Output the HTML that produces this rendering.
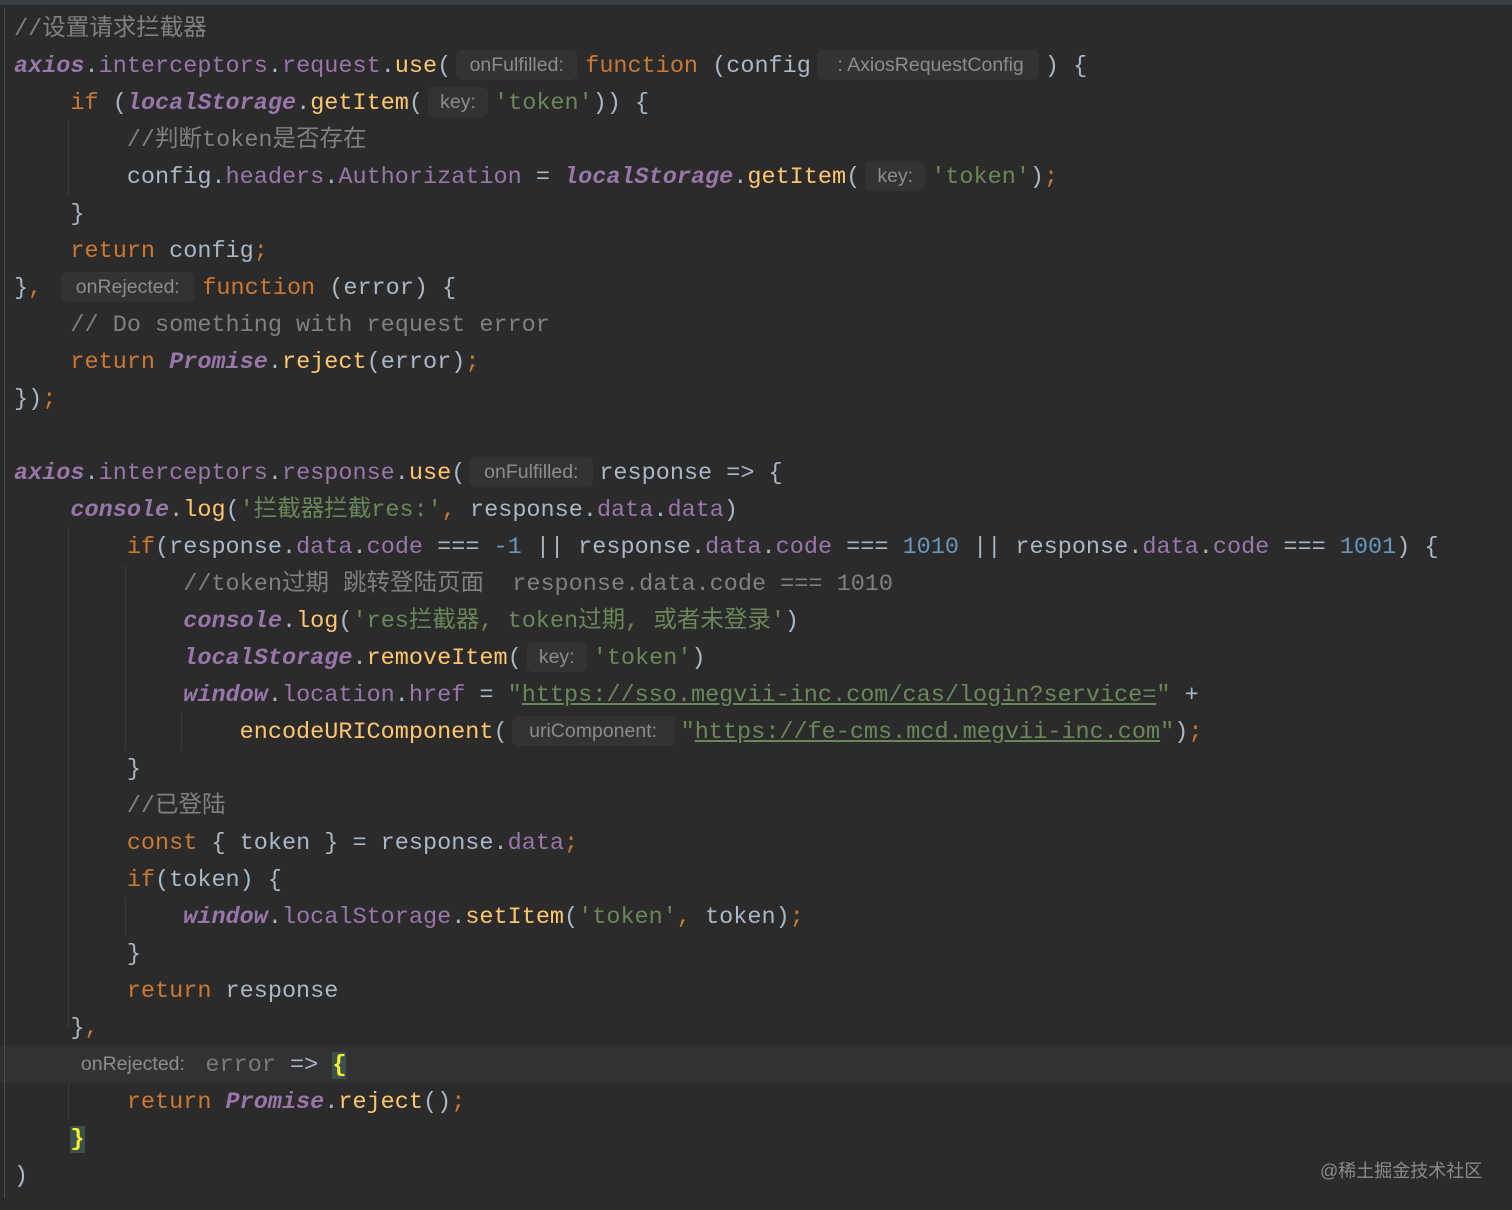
<!DOCTYPE html>
<html><head><meta charset="utf-8"><style>
html,body{margin:0;padding:0}
body{width:1512px;height:1210px;background:#2b2b2b;position:relative;overflow:hidden;font-family:"Liberation Mono","Noto Sans CJK SC",monospace;font-size:23.5px;color:#a9b7c6}
.top{position:absolute;left:0;top:0;width:1512px;height:5px;background:#3c3f41}
.l{position:absolute;left:14px;height:37px;line-height:37px;white-space:pre;margin-top:3px}
.k{color:#cc7832}.p{color:#9876aa}.i{color:#9876aa;font-style:italic;font-weight:bold}
.f{color:#ffc66d}.s{color:#6a8759}.n{color:#6897bb}.c{color:#808080}
.u{text-decoration:underline}
.h{display:inline-block;font-family:"Liberation Sans",sans-serif;font-size:19.5px;color:#8c8c8c;background:#333333;border-radius:6px;text-align:center;line-height:30px;height:30px;vertical-align:1px}
.g{position:absolute;width:1px;background:#3a3a3a}
.cur{position:absolute;left:0;top:1046px;width:1512px;height:37px;background:#323232}
.br{background:#3b514d;color:#ffef28;font-weight:bold}
.gut{position:absolute;left:4px;top:8px;width:1px;height:1190px;background:#4a4a4a}
.wm{position:absolute;left:1320px;top:1157px;font-family:"Liberation Sans","Noto Sans CJK SC",sans-serif;font-size:18px;color:#8a8a8a}
</style></head><body>
<div class="top"></div>
<div class="cur"></div>
<div class="gut"></div>
<div class="g" style="left:68px;top:120px;height:75px"></div>
<div class="g" style="left:68px;top:527px;height:500px"></div>
<div class="g" style="left:125px;top:565px;height:185px"></div>
<div class="g" style="left:181px;top:712px;height:38px"></div>
<div class="g" style="left:125px;top:898px;height:37px"></div>
<div class="g" style="left:68px;top:1082px;height:37px"></div>

<div class="l c" style="top:8px">//设置请求拦截器</div>
<div class="l" style="top:45px"><span class="i">axios</span>.<span class="p">interceptors</span>.<span class="p">request</span>.<span class="f">use</span>(<span class="h" style="width:121px;margin:0 8px 0 5px">onFulfilled:</span><span class="k">function </span>(config<span class="h" style="width:222px;margin:0 6px 0 6px"> : AxiosRequestConfig</span>) {</div>
<div class="l" style="top:82px">    <span class="k">if </span>(<span class="i">localStorage</span>.<span class="f">getItem</span>(<span class="h" style="width:60px;margin:0 6px 0 5px">key:</span><span class="s">'token'</span>)) {</div>
<div class="l c" style="top:119px">        //判断token是否存在</div>
<div class="l" style="top:156px">        config.<span class="p">headers</span>.<span class="p">Authorization</span> = <span class="i">localStorage</span>.<span class="f">getItem</span>(<span class="h" style="width:60px;margin:0 6px 0 5px">key:</span><span class="s">'token'</span>)<span class="k">;</span></div>
<div class="l" style="top:193px">    }</div>
<div class="l" style="top:230px">    <span class="k">return </span>config<span class="k">;</span></div>
<div class="l" style="top:267px">}<span class="k">,</span> <span class="h" style="width:133px;margin:0 8px 0 5px">onRejected:</span><span class="k">function </span>(error) {</div>
<div class="l c" style="top:304px">    // Do something with request error</div>
<div class="l" style="top:341px">    <span class="k">return </span><span class="i">Promise</span>.<span class="f">reject</span>(error)<span class="k">;</span></div>
<div class="l" style="top:378px">})<span class="k">;</span></div>
<div class="l" style="top:452px"><span class="i">axios</span>.<span class="p">interceptors</span>.<span class="p">response</span>.<span class="f">use</span>(<span class="h" style="width:124px;margin:0 6px 0 4px">onFulfilled:</span>response =&gt; {</div>
<div class="l" style="top:489px">    <span class="i">console</span>.<span class="f">log</span>(<span class="s">'拦截器拦截res:'</span><span class="k">, </span>response.<span class="p">data</span>.<span class="p">data</span>)</div>
<div class="l" style="top:526px">        <span class="k">if</span>(response.<span class="p">data</span>.<span class="p">code</span> === <span class="n">-1</span> || response.<span class="p">data</span>.<span class="p">code</span> === <span class="n">1010</span> || response.<span class="p">data</span>.<span class="p">code</span> === <span class="n">1001</span>) {</div>
<div class="l c" style="top:563px">            //token过期 跳转登陆页面  response.data.code === 1010</div>
<div class="l" style="top:600px">            <span class="i">console</span>.<span class="f">log</span>(<span class="s">'res拦截器, token过期, 或者未登录'</span>)</div>
<div class="l" style="top:637px">            <span class="i">localStorage</span>.<span class="f">removeItem</span>(<span class="h" style="width:60px;margin:0 6px 0 5px">key:</span><span class="s">'token'</span>)</div>
<div class="l" style="top:674px">            <span class="i">window</span>.<span class="p">location</span>.<span class="p">href</span> = <span class="s">"<span class="u">https://sso.megvii-inc.com/cas/login?service=</span>"</span> +</div>
<div class="l" style="top:711px">                <span class="f">encodeURIComponent</span>(<span class="h" style="width:163px;margin:0 6px 0 4px">uriComponent:</span><span class="s">"<span class="u">https://fe-cms.mcd.megvii-inc.com</span>"</span>)<span class="k">;</span></div>
<div class="l" style="top:748px">        }</div>
<div class="l c" style="top:785px">        //已登陆</div>
<div class="l" style="top:822px">        <span class="k">const </span>{ token } = response.<span class="p">data</span><span class="k">;</span></div>
<div class="l" style="top:859px">        <span class="k">if</span>(token) {</div>
<div class="l" style="top:896px">            <span class="i">window</span>.<span class="p">localStorage</span>.<span class="f">setItem</span>(<span class="s">'token'</span><span class="k">, </span>token)<span class="k">;</span></div>
<div class="l" style="top:933px">        }</div>
<div class="l" style="top:970px">        <span class="k">return </span>response</div>
<div class="l" style="top:1007px">    }<span class="k">,</span></div>
<div class="l" style="top:1044px">    <span class="h" style="width:133px;margin:0 6px 0 -4px">onRejected:</span><span style="color:#7a7a7a">error</span> =&gt; <span class="br">{</span></div>
<div class="l" style="top:1081px">        <span class="k">return </span><span class="i">Promise</span>.<span class="f">reject</span>()<span class="k">;</span></div>
<div class="l" style="top:1118px">    <span class="br">}</span></div>
<div class="l" style="top:1155px">)</div>
<div class="wm">@稀土掘金技术社区</div>
</body></html>
